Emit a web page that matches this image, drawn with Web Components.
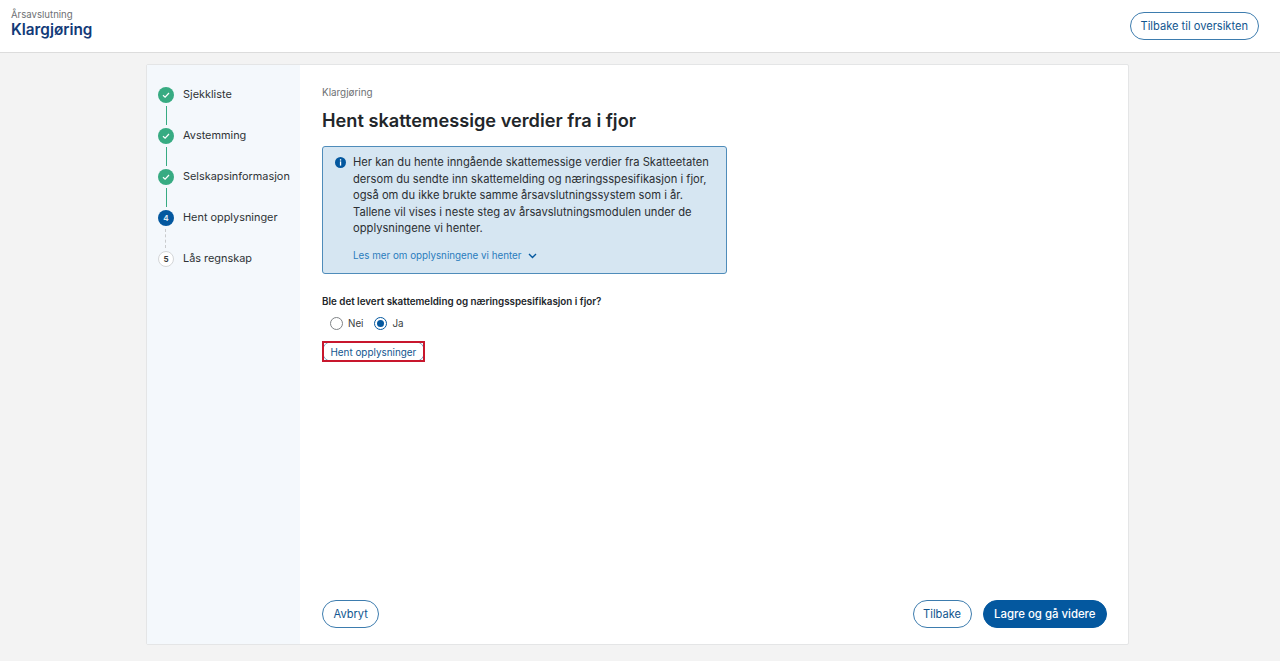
<!DOCTYPE html>
<html lang="no">
<head>
<meta charset="utf-8">
<title>Klargjøring</title>
<style>
    html, body { margin: 0; height: 100%; }
    body {
        background: #f3f3f3;
        font-family: Inter, "Liberation Sans", sans-serif;
        color: #2b2f33;
    }
</style>
</head>
<body>
<app-shell>
    <top-bar slot="top" eyebrow="Årsavslutning" heading="Klargjøring">
        <pill-button>Tilbake til oversikten</pill-button>
    </top-bar>
    <step-list slot="side">
        <step-item state="done" label="Sjekkliste"></step-item>
        <step-item state="done" label="Avstemming"></step-item>
        <step-item state="done" label="Selskapsinformasjon"></step-item>
        <step-item state="current" number="4" label="Hent opplysninger"></step-item>
        <step-item state="todo" number="5" label="Lås regnskap" last></step-item>
    </step-list>
    <div slot="main" class="page">
        <page-heading crumb="Klargjøring" heading="Hent skattemessige verdier fra i fjor"></page-heading>
        <info-box link="Les mer om opplysningene vi henter">Her kan du hente inngående skattemessige verdier fra Skatteetaten<br>dersom du sendte inn skattemelding og næringsspesifikasjon i fjor,<br>også om du ikke brukte samme årsavslutningssystem som i år.<br>Tallene vil vises i neste steg av årsavslutningsmodulen under de<br>opplysningene vi henter.</info-box>
        <radio-question question="Ble det levert skattemelding og næringsspesifikasjon i fjor?"></radio-question>
        <fetch-button>Hent opplysninger</fetch-button>
    </div>
    <pill-button slot="footer-left" style="--pad: 10.5px">Avbryt</pill-button>
    <pill-button slot="footer-right" style="--pad: 9.5px">Tilbake</pill-button>
    <pill-button slot="footer-right" primary style="--pad: 10.5px">Lagre og gå videre</pill-button>
</app-shell>

<script>
class AppShell extends HTMLElement {
    constructor() {
        super();
        this.attachShadow({ mode: 'open' });
        this.shadowRoot.innerHTML = `
            <style>
                :host {
                    display: flex;
                    flex-direction: column;
                    height: 661px;
                    overflow: hidden;
                }
                .content {
                    flex: 1;
                    min-height: 0;
                    padding: 11px 151px 16px 146px;
                    display: flex;
                }
                .card {
                    flex: 1;
                    display: flex;
                    background: #fff;
                    border: 1px solid #e4e5e6;
                    border-radius: 2px;
                }
                .side {
                    width: 153px;
                    flex: none;
                    background: #f4f8fc;
                }
                .main {
                    flex: 1;
                    display: flex;
                    flex-direction: column;
                    padding: 0 21px 16px 22px;
                }
                .body { flex: 1; }
                .footer {
                    display: flex;
                    justify-content: space-between;
                    align-items: center;
                }
                .right { display: flex; gap: 11px; }
            </style>
            <slot name="top"></slot>
            <div class="content">
                <div class="card">
                    <div class="side"><slot name="side"></slot></div>
                    <div class="main">
                        <div class="body"><slot name="main"></slot></div>
                        <div class="footer">
                            <div><slot name="footer-left"></slot></div>
                            <div class="right"><slot name="footer-right"></slot></div>
                        </div>
                    </div>
                </div>
            </div>
        `;
    }
}

class TopBar extends HTMLElement {
    connectedCallback() {
        this.attachShadow({ mode: 'open' });
        this.shadowRoot.innerHTML = `
            <style>
                :host {
                    display: flex;
                    justify-content: space-between;
                    align-items: center;
                    height: 52px;
                    background: #fff;
                    border-bottom: 1px solid #dcdcdc;
                    padding: 0 21px 0 11px;
                    flex: none;
                }
                .title { padding-bottom: 4px; }
                .eyebrow { font-size: 9.6px; line-height: 12px; color: #6d7073; padding-top: 1px; }
                h1 { margin: -1px 0 0; font-size: 15.3px; line-height: 20px; font-weight: 600; color: #123a78; }
            </style>
            <div class="title">
                <div class="eyebrow">${this.getAttribute('eyebrow')}</div>
                <h1>${this.getAttribute('heading')}</h1>
            </div>
            <slot></slot>
        `;
    }
}

class PillButton extends HTMLElement {
    constructor() {
        super();
        this.attachShadow({ mode: 'open' });
        this.shadowRoot.innerHTML = `
            <style>
                :host {
                    display: inline-flex;
                    align-items: center;
                    height: 26px;
                    padding: 0 var(--pad, 10px);
                    border: 1px solid #3d7cae;
                    border-radius: 14px;
                    background: #fff;
                    color: #11568f;
                    font-size: 11.1px;
                    white-space: nowrap;
                }
                :host([primary]) {
                    background: #04589f;
                    border-color: #04589f;
                    color: #fff;
                    font-size: 11.4px;
                    font-weight: 500;
                }
            </style>
            <slot></slot>
        `;
    }
}

class StepList extends HTMLElement {
    constructor() {
        super();
        this.attachShadow({ mode: 'open' });
        this.shadowRoot.innerHTML = `
            <style>
                :host { display: flex; flex-direction: column; padding: 22px 0 0 11px; }
            </style>
            <slot></slot>
        `;
    }
}

class StepItem extends HTMLElement {
    connectedCallback() {
        const state = this.getAttribute('state');
        const mark = state === 'done'
            ? `<svg width="10" height="10" viewBox="0 0 10 10" fill="none" stroke="#fff" stroke-width="1.2"><path d="M2 5.2l2.1 2L8 3"/></svg>`
            : this.getAttribute('number');
        this.attachShadow({ mode: 'open' });
        this.shadowRoot.innerHTML = `
            <style>
                :host { display: flex; gap: 9px; height: 41px; font-size: 10.9px; color: #2f3336; }
                .rail { display: flex; flex-direction: column; align-items: center; width: 16px; }
                .dot {
                    width: 16px;
                    height: 16px;
                    flex: none;
                    box-sizing: border-box;
                    border-radius: 50%;
                    display: flex;
                    align-items: center;
                    justify-content: center;
                    font-size: 8px;
                    font-weight: 700;
                }
                .done { background: #37ab82; }
                .current { background: #04589f; color: #dfe9f3; }
                .todo { background: #fff; border: 1px solid #d4d6d8; color: #3a3d40; }
                .line { flex: 1; width: 1px; margin: 3px 0; background: #37ab82; }
                .line.dash { background: none; border-left: 1px dashed #c9cbcd; }
                .line.none { visibility: hidden; }
                .label { line-height: 15px; white-space: nowrap; }
            </style>
            <div class="rail">
                <div class="dot ${state}">${mark}</div>
                <div class="line ${state === 'current' ? 'dash' : ''} ${this.hasAttribute('last') ? 'none' : ''}"></div>
            </div>
            <div class="label">${this.getAttribute('label')}</div>
        `;
    }
}

class PageHeading extends HTMLElement {
    connectedCallback() {
        this.attachShadow({ mode: 'open' });
        this.shadowRoot.innerHTML = `
            <style>
                :host { display: block; padding-top: 21px; }
                .crumb { font-size: 9.9px; line-height: 13px; color: #6d7073; }
                h2 { margin: 9px 0 0; font-size: 18.2px; line-height: 24px; font-weight: 600; color: #22262a; }
            </style>
            <div class="crumb">${this.getAttribute('crumb')}</div>
            <h2>${this.getAttribute('heading')}</h2>
        `;
    }
}

class InfoBox extends HTMLElement {
    connectedCallback() {
        this.attachShadow({ mode: 'open' });
        this.shadowRoot.innerHTML = `
            <style>
                :host {
                    display: flex;
                    gap: 7px;
                    box-sizing: border-box;
                    width: 405px;
                    height: 128px;
                    margin-top: 14px;
                    padding: 7px 12px 0 12px;
                    background: #d6e6f2;
                    border: 1px solid #4f8cba;
                    border-radius: 3px;
                    font-size: 11.2px;
                    line-height: 16.5px;
                    color: #2b2f33;
                }
                svg { flex: none; margin-top: 3px; }
                .text { white-space: nowrap; }
                .more {
                    display: flex;
                    align-items: center;
                    gap: 7px;
                    margin-top: 11px;
                    font-size: 9.8px;
                    color: #2a7cbd;
                }
            </style>
            <svg width="11" height="11" viewBox="0 0 11 11">
                <circle cx="5.5" cy="5.5" r="5.5" fill="#04589f"/>
                <rect x="4.9" y="2.2" width="1.3" height="1.4" fill="#fff"/>
                <rect x="4.9" y="4.4" width="1.3" height="4.2" fill="#fff"/>
            </svg>
            <div>
                <div class="text"><slot></slot></div>
                <div class="more">
                    ${this.getAttribute('link')}
                    <svg style="margin:1px 0 0" width="9" height="6" viewBox="0 0 9 6" fill="none" stroke="#04589f" stroke-width="1.4"><path d="M1 1l3.5 3.5L8 1"/></svg>
                </div>
            </div>
        `;
    }
}

class RadioQuestion extends HTMLElement {
    connectedCallback() {
        this.attachShadow({ mode: 'open' });
        this.shadowRoot.innerHTML = `
            <style>
                :host { display: block; margin-top: 21px; font-size: 9.8px; }
                .q { line-height: 14px; font-weight: 600; color: #22262a; }
                .opts { display: flex; align-items: center; gap: 11px; margin: 6px 0 0 8px; height: 16px; color: #3a3d40; }
                label { display: flex; align-items: center; gap: 5px; }
                .r {
                    box-sizing: border-box;
                    width: 13px;
                    height: 13px;
                    border: 1px solid #7f8386;
                    border-radius: 50%;
                    background: #fff;
                    display: flex;
                    align-items: center;
                    justify-content: center;
                }
                .r.on { border-color: #04589f; }
                .r.on::after { content: ""; width: 7px; height: 7px; border-radius: 50%; background: #04589f; }
            </style>
            <div class="q">${this.getAttribute('question')}</div>
            <div class="opts">
                <label><span class="r"></span>Nei</label>
                <label><span class="r on"></span>Ja</label>
            </div>
        `;
    }
}

class FetchButton extends HTMLElement {
    constructor() {
        super();
        this.attachShadow({ mode: 'open' });
        this.shadowRoot.innerHTML = `
            <style>
                :host {
                    display: inline-flex;
                    box-sizing: border-box;
                    height: 21px;
                    margin-top: 10px;
                    outline: 2px solid #c8172d;
                    outline-offset: -2px;
                }
                span {
                    display: flex;
                    align-items: center;
                    padding: 0 7.5px;
                    border: 1px solid #7fa6c6;
                    border-radius: 10px;
                    background: #fff;
                    color: #11568f;
                    font-size: 9.9px;
                    white-space: nowrap;
                }
            </style>
            <span><slot></slot></span>
        `;
    }
}

customElements.define('app-shell', AppShell);
customElements.define('top-bar', TopBar);
customElements.define('pill-button', PillButton);
customElements.define('step-list', StepList);
customElements.define('step-item', StepItem);
customElements.define('page-heading', PageHeading);
customElements.define('info-box', InfoBox);
customElements.define('radio-question', RadioQuestion);
customElements.define('fetch-button', FetchButton);
</script>
</body>
</html>
